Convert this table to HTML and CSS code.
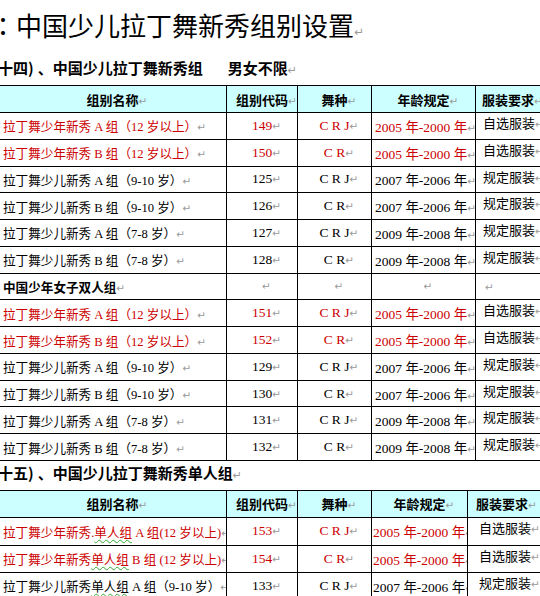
FILE: index.html
```html
<!DOCTYPE html>
<html lang="zh">
<head>
<meta charset="utf-8">
<title>中国少儿拉丁舞新秀组别设置</title>
<link rel="stylesheet" href="styles.css">
</head>
<body>
<div class="page">
  <div class="title"><span class="colon" lang="ja">：</span>中国少儿拉丁舞新秀组别设置<span class="pm">↵</span></div>
  <div class="sec">十四<span class="par">)</span>、中国少儿拉丁舞新秀组<span class="gap"></span>男女不限<span class="pm">↵</span></div>

  <div class="tbl t1">
    <div class="row head">
      <div class="c c1 ctr"><span>组别名称<span class="pm">↵</span></span></div>
      <div class="c ctr"><span>组别代码<span class="pm">↵</span></span></div>
      <div class="c ctr"><span>舞种<span class="pm">↵</span></span></div>
      <div class="c ctr"><span>年龄规定<span class="pm">↵</span></span></div>
      <div class="c c5h"><span>服装要求<span class="pm">↵</span></span></div>
    </div>
    <div class="row red">
      <div class="c c1"><span>拉丁舞少年新秀 A 组（12 岁以上）<span class="pm">↵</span></span></div>
      <div class="c ctr"><span>149<span class="pm">↵</span></span></div>
      <div class="c ctr"><span>C R J<span class="pm">↵</span></span></div>
      <div class="c c4"><span>2005 年-2000 年<span class="pm">↵</span></span></div>
      <div class="c c5"><span>自选服装<span class="pm">↵</span></span></div>
    </div>
    <div class="row red">
      <div class="c c1"><span>拉丁舞少年新秀 B 组（12 岁以上）<span class="pm">↵</span></span></div>
      <div class="c ctr"><span>150<span class="pm">↵</span></span></div>
      <div class="c ctr"><span>C R<span class="pm">↵</span></span></div>
      <div class="c c4"><span>2005 年-2000 年<span class="pm">↵</span></span></div>
      <div class="c c5"><span>自选服装<span class="pm">↵</span></span></div>
    </div>
    <div class="row">
      <div class="c c1"><span>拉丁舞少儿新秀 A 组（9-10 岁）<span class="pm">↵</span></span></div>
      <div class="c ctr"><span>125<span class="pm">↵</span></span></div>
      <div class="c ctr"><span>C R J<span class="pm">↵</span></span></div>
      <div class="c c4"><span>2007 年-2006 年<span class="pm">↵</span></span></div>
      <div class="c c5"><span>规定服装<span class="pm">↵</span></span></div>
    </div>
    <div class="row">
      <div class="c c1"><span>拉丁舞少儿新秀 B 组（9-10 岁）<span class="pm">↵</span></span></div>
      <div class="c ctr"><span>126<span class="pm">↵</span></span></div>
      <div class="c ctr"><span>C R<span class="pm">↵</span></span></div>
      <div class="c c4"><span>2007 年-2006 年<span class="pm">↵</span></span></div>
      <div class="c c5"><span>规定服装<span class="pm">↵</span></span></div>
    </div>
    <div class="row">
      <div class="c c1"><span>拉丁舞少儿新秀 A 组（7-8 岁）<span class="pm">↵</span></span></div>
      <div class="c ctr"><span>127<span class="pm">↵</span></span></div>
      <div class="c ctr"><span>C R J<span class="pm">↵</span></span></div>
      <div class="c c4"><span>2009 年-2008 年<span class="pm">↵</span></span></div>
      <div class="c c5"><span>规定服装<span class="pm">↵</span></span></div>
    </div>
    <div class="row">
      <div class="c c1"><span>拉丁舞少儿新秀 B 组（7-8 岁）<span class="pm">↵</span></span></div>
      <div class="c ctr"><span>128<span class="pm">↵</span></span></div>
      <div class="c ctr"><span>C R<span class="pm">↵</span></span></div>
      <div class="c c4"><span>2009 年-2008 年<span class="pm">↵</span></span></div>
      <div class="c c5"><span>规定服装<span class="pm">↵</span></span></div>
    </div>
    <div class="row">
      <div class="c c1 bold"><span>中国少年女子双人组<span class="pm">↵</span></span></div>
      <div class="c ctr"><span><span class="pm">↵</span></span></div>
      <div class="c ctr"><span><span class="pm">↵</span></span></div>
      <div class="c ctr"><span><span class="pm">↵</span></span></div>
      <div class="c c5 mid"><span><span class="pm">↵</span></span></div>
    </div>
    <div class="row red">
      <div class="c c1"><span>拉丁舞少年新秀 A 组（12 岁以上）<span class="pm">↵</span></span></div>
      <div class="c ctr"><span>151<span class="pm">↵</span></span></div>
      <div class="c ctr"><span>C R J<span class="pm">↵</span></span></div>
      <div class="c c4"><span>2005 年-2000 年<span class="pm">↵</span></span></div>
      <div class="c c5"><span>自选服装<span class="pm">↵</span></span></div>
    </div>
    <div class="row red">
      <div class="c c1"><span>拉丁舞少年新秀 B 组（12 岁以上）<span class="pm">↵</span></span></div>
      <div class="c ctr"><span>152<span class="pm">↵</span></span></div>
      <div class="c ctr"><span>C R<span class="pm">↵</span></span></div>
      <div class="c c4"><span>2005 年-2000 年<span class="pm">↵</span></span></div>
      <div class="c c5"><span>自选服装<span class="pm">↵</span></span></div>
    </div>
    <div class="row">
      <div class="c c1"><span>拉丁舞少儿新秀 A 组（9-10 岁）<span class="pm">↵</span></span></div>
      <div class="c ctr"><span>129<span class="pm">↵</span></span></div>
      <div class="c ctr"><span>C R J<span class="pm">↵</span></span></div>
      <div class="c c4"><span>2007 年-2006 年<span class="pm">↵</span></span></div>
      <div class="c c5"><span>规定服装<span class="pm">↵</span></span></div>
    </div>
    <div class="row">
      <div class="c c1"><span>拉丁舞少儿新秀 B 组（9-10 岁）<span class="pm">↵</span></span></div>
      <div class="c ctr"><span>130<span class="pm">↵</span></span></div>
      <div class="c ctr"><span>C R<span class="pm">↵</span></span></div>
      <div class="c c4"><span>2007 年-2006 年<span class="pm">↵</span></span></div>
      <div class="c c5"><span>规定服装<span class="pm">↵</span></span></div>
    </div>
    <div class="row">
      <div class="c c1"><span>拉丁舞少儿新秀 A 组（7-8 岁）<span class="pm">↵</span></span></div>
      <div class="c ctr"><span>131<span class="pm">↵</span></span></div>
      <div class="c ctr"><span>C R J<span class="pm">↵</span></span></div>
      <div class="c c4"><span>2009 年-2008 年<span class="pm">↵</span></span></div>
      <div class="c c5"><span>规定服装<span class="pm">↵</span></span></div>
    </div>
    <div class="row">
      <div class="c c1"><span>拉丁舞少儿新秀 B 组（7-8 岁）<span class="pm">↵</span></span></div>
      <div class="c ctr"><span>132<span class="pm">↵</span></span></div>
      <div class="c ctr"><span>C R<span class="pm">↵</span></span></div>
      <div class="c c4"><span>2009 年-2008 年<span class="pm">↵</span></span></div>
      <div class="c c5"><span>规定服装<span class="pm">↵</span></span></div>
    </div>
  </div>

  <div class="sec sec2">十五<span class="par">)</span>、中国少儿拉丁舞新秀单人组<span class="pm">↵</span></div>

  <div class="tbl t2">
    <div class="row head">
      <div class="c c1 ctr"><span>组别名称<span class="pm">↵</span></span></div>
      <div class="c ctr"><span>组别代码<span class="pm">↵</span></span></div>
      <div class="c ctr"><span>舞种<span class="pm">↵</span></span></div>
      <div class="c ctr"><span>年龄规定<span class="pm">↵</span></span></div>
      <div class="c c5h"><span>服装要求<span class="pm">↵</span></span></div>
    </div>
    <div class="row red r28">
      <div class="c c1"><span>拉丁舞少年新秀.<span class="gr">单人组</span> A 组(12 岁以上)<span class="pm">↵</span></span></div>
      <div class="c ctr"><span>153<span class="pm">↵</span></span></div>
      <div class="c ctr"><span>C R J<span class="pm">↵</span></span></div>
      <div class="c c4"><span>2005 年-2000 年<span class="pm">↵</span></span></div>
      <div class="c c5"><span>自选服装<span class="pm">↵</span></span></div>
    </div>
    <div class="row red">
      <div class="c c1"><span>拉丁舞少年新秀<span class="gr">单人组</span> B 组 (12 岁以上)<span class="pm">↵</span></span></div>
      <div class="c ctr"><span>154<span class="pm">↵</span></span></div>
      <div class="c ctr"><span>C R<span class="pm">↵</span></span></div>
      <div class="c c4"><span>2005 年-2000 年<span class="pm">↵</span></span></div>
      <div class="c c5"><span>自选服装<span class="pm">↵</span></span></div>
    </div>
    <div class="row">
      <div class="c c1"><span>拉丁舞少儿新秀<span class="gr">单人组</span> A 组（9-10 岁）<span class="pm">↵</span></span></div>
      <div class="c ctr"><span>133<span class="pm">↵</span></span></div>
      <div class="c ctr"><span>C R J<span class="pm">↵</span></span></div>
      <div class="c c4"><span>2007 年-2006 年<span class="pm">↵</span></span></div>
      <div class="c c5"><span>规定服装<span class="pm">↵</span></span></div>
    </div>
  </div>
</div>
</body>
</html>
```
FILE: styles.css
```css
html, body {
  margin: 0;
  padding: 0;
  background: #ffffff;
}
body {
  width: 540px;
  height: 596px;
  overflow: hidden;
  color: #000000;
  font-family: "Liberation Serif", "Noto Sans CJK SC", serif;
}
.page {
  width: 540px;
}
.pm {
  display: inline-block;
  width: 0;
  overflow: visible;
  white-space: nowrap;
  color: #9a9a9a;
  font-family: "DejaVu Sans", sans-serif;
  font-size: 10.5px;
  font-weight: 400;
}
.title {
  height: 50px;
  line-height: 50px;
  margin-left: -10px;
  font-family: "Noto Sans CJK SC", sans-serif;
  font-size: 26px;
  font-weight: 400;
  white-space: nowrap;
}
.colon {
  font-family: "Noto Sans CJK JP", sans-serif;
}
.title .pm {
  font-size: 12px;
}
.sec {
  height: 35px;
  line-height: 35px;
  margin-left: -2px;
  font-family: "Noto Sans CJK SC", sans-serif;
  font-size: 15px;
  font-weight: 700;
  white-space: nowrap;
}
.par {
  margin-right: 4px;
}
.sec .pm {
  font-size: 11px;
}
.sec2 {
  height: 29px;
  line-height: 24px;
}
.gap {
  display: inline-block;
  width: 25px;
}
.tbl {
  margin-left: -6px;
  border-top: 1px solid #000000;
  width: 620px;
}
.row {
  display: grid;
  height: 26.77px;
  box-sizing: border-box;
  border-bottom: 1px solid #000000;
}
.t1 .row {
  grid-template-columns: 233px 71px 74px 104px 138px;
}
.t2 .row {
  grid-template-columns: 233px 71px 74px 96px 146px;
}
.row.head {
  height: 27px;
  background: #ccffff;
}
.row.r28 {
  height: 28px;
}
.c {
  display: flex;
  align-items: center;
  box-sizing: border-box;
  border-right: 1px solid #000000;
  overflow: hidden;
  white-space: nowrap;
  font-size: 13.5px;
}
.head .c {
  font-family: "Noto Sans CJK SC", sans-serif;
  font-weight: 700;
  font-size: 13px;
}
.ctr {
  justify-content: center;
}
.c1 {
  padding-left: 9px;
  font-size: 12.6px;
}
.head .c1 {
  padding-left: 5px;
}
.bold {
  font-family: "Noto Sans CJK SC", sans-serif;
  font-weight: 700;
}
.c4 {
  padding-left: 3px;
}
.t2 .c4 {
  padding-left: 1px;
}
.c5h {
  padding-left: 6px;
}
.t2 .c5h {
  padding-left: 8px;
}
.c5 {
  align-items: flex-start;
  padding-top: 1px;
  padding-left: 7px;
  line-height: 17px;
  font-size: 13px;
  font-family: "Noto Sans CJK SC", sans-serif;
  color: #000000;
}
.t2 .c5 {
  padding-left: 11px;
}
.c5.mid {
  align-items: center;
  padding-top: 0;
  padding-left: 9px;
}
.red .c {
  color: #cc0000;
}
.red .c5 {
  color: #000000;
}
.gr {
  text-decoration: underline wavy #33aa33;
  text-decoration-thickness: 1px;
  text-underline-offset: 2px;
}
```
